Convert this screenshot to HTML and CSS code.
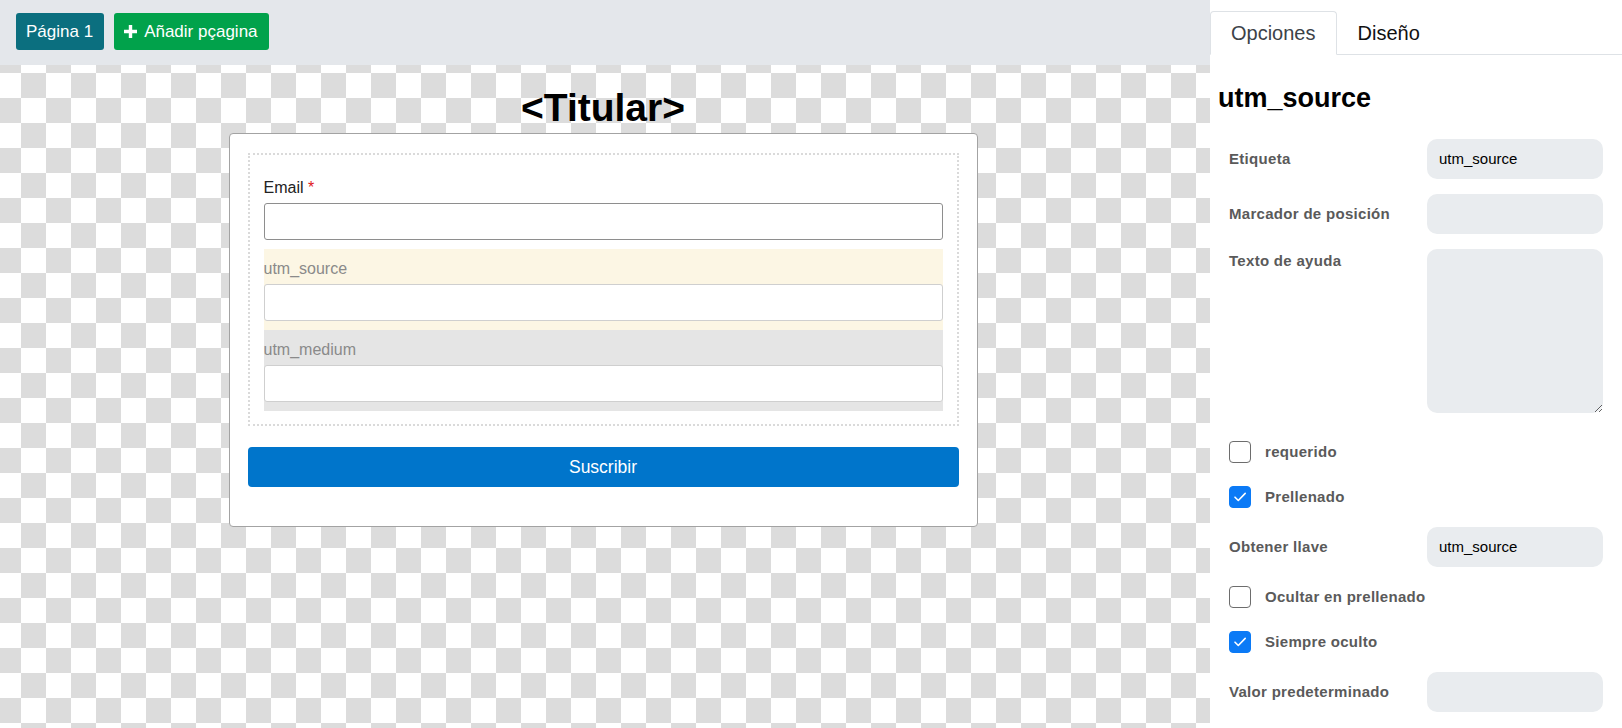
FILE: index.html
```html
<!DOCTYPE html>
<html lang="es">
<head>
<meta charset="utf-8">
<title>Editor de formulario</title>
<link rel="stylesheet" href="styles.css">
</head>
<body>
<div class="app">
  <div class="editor">
    <div class="toolbar">
      <button class="tbtn page">Página 1</button>
      <button class="tbtn add"><svg class="plus" width="13" height="13" viewBox="0 0 13 13"><path d="M4.8 0h3.4v4.8H13v3.4H8.2V13H4.8V8.2H0V4.8h4.8z" fill="#fff"/></svg>Añadir pçagina</button>
    </div>
    <div class="canvas">
      <h1 class="title">&lt;Titular&gt;</h1>
      <div class="card">
        <div class="fields">
          <div class="field">
            <label class="flabel">Email <span class="req">*</span></label>
            <div class="finput dark"></div>
          </div>
          <div class="field hidden source">
            <label class="flabel muted">utm_source</label>
            <div class="finput"></div>
          </div>
          <div class="field hidden medium">
            <label class="flabel muted">utm_medium</label>
            <div class="finput"></div>
          </div>
        </div>
        <button class="submit">Suscribir</button>
      </div>
    </div>
  </div>
  <aside class="panel">
    <div class="tabs">
      <div class="tab active">Opciones</div>
      <div class="tab">Diseño</div>
    </div>
    <h2 class="panel-title">utm_source</h2>
    <div class="rows">
      <div class="row"><span class="plabel">Etiqueta</span><div class="pinput">utm_source</div></div>
      <div class="row"><span class="plabel">Marcador de posición</span><div class="pinput"></div></div>
      <div class="row top"><span class="plabel">Texto de ayuda</span><textarea class="ptext"></textarea></div>
      <div class="crow"><span class="cb"></span><span class="plabel">requerido</span></div>
      <div class="crow"><span class="cb on"><svg width="22" height="22" viewBox="0 0 22 22"><path d="M6 11.2l3.3 3.3L16.2 7.4" fill="none" stroke="#fff" stroke-width="1.6" stroke-linecap="round" stroke-linejoin="round"/></svg></span><span class="plabel">Prellenado</span></div>
      <div class="row"><span class="plabel">Obtener llave</span><div class="pinput">utm_source</div></div>
      <div class="crow"><span class="cb"></span><span class="plabel">Ocultar en prellenado</span></div>
      <div class="crow"><span class="cb on"><svg width="22" height="22" viewBox="0 0 22 22"><path d="M6 11.2l3.3 3.3L16.2 7.4" fill="none" stroke="#fff" stroke-width="1.6" stroke-linecap="round" stroke-linejoin="round"/></svg></span><span class="plabel">Siempre oculto</span></div>
      <div class="row"><span class="plabel">Valor predeterminado</span><div class="pinput"></div></div>
    </div>
  </aside>
</div>
</body>
</html>
```
FILE: styles.css
```css
* { box-sizing: border-box; }
html, body { margin: 0; padding: 0; }
body {
  font-family: "Liberation Sans", Arial, Helvetica, sans-serif;
  background: #fff;
  color: #000;
}
.app {
  display: flex;
  width: 1622px;
  height: 728px;
  overflow: hidden;
}
.editor {
  width: 1210px;
  display: flex;
  flex-direction: column;
}
.toolbar {
  height: 65px;
  background: #e4e7eb;
  padding: 13px 16px 0;
  display: flex;
  gap: 10px;
  align-items: flex-start;
}
.tbtn {
  height: 37px;
  border: 0;
  border-radius: 3px;
  color: #fff;
  font-family: "Liberation Sans", Arial, sans-serif;
  font-size: 17px;
  display: inline-flex;
  align-items: center;
  padding: 0 11px 0 10px;
  cursor: pointer;
}
.tbtn.page { background: #0b6f7f; }
.tbtn.add { background: #01a24b; }
.plus { margin-right: 7px; }
.canvas {
  flex: 1;
  padding: 23px 4px 0 0;
  background-color: #fff;
  background-image: repeating-conic-gradient(#dcdcdc 0 25%, #ffffff 0 50%);
  background-size: 50px 50px;
  background-position: 21px 33px;
}
.title {
  margin: 0;
  text-align: center;
  font-size: 39px;
  line-height: 40px;
  font-weight: bold;
  color: #000;
}
.card {
  width: 749px;
  margin: 5px auto 0;
  background: #fff;
  border: 1px solid #a3a3a3;
  border-radius: 4px;
  padding: 19px 18px 39px;
}
.fields {
  border: 2px dotted #dadada;
  padding: 13px 14px;
}
.field {
  padding: 8px 0 9px;
}
.field.source { background: #fcf6e4; }
.field.medium { background: #e5e5e5; }
.flabel {
  display: block;
  font-size: 16px;
  line-height: 24px;
  margin-bottom: 3px;
  color: #222;
}
.flabel.muted { color: #8a8a8a; }
.req { color: #e0161c; }
.finput {
  height: 37px;
  background: #fff;
  border: 1px solid #cfcfcf;
  border-radius: 3px;
}
.finput.dark { border-color: #8e8e8e; }
.submit {
  display: block;
  width: 100%;
  height: 40px;
  margin-top: 21px;
  border: 0;
  border-radius: 4px;
  background: #0075cb;
  color: #fff;
  font-family: "Liberation Sans", Arial, sans-serif;
  font-size: 17.5px;
}
.panel {
  flex: 1;
  background: #fff;
}
.tabs {
  display: flex;
  padding-top: 11px;
  border-bottom: 1px solid #dee2e6;
}
.tab {
  height: 44px;
  padding: 0 20px;
  display: flex;
  align-items: center;
  font-size: 20px;
  color: #111;
  border: 1px solid transparent;
  border-radius: 4px 4px 0 0;
  margin-bottom: -1px;
}
.tab.active {
  color: #3c4248;
  border-color: #dee2e6 #dee2e6 #fff;
  background: #fff;
}
.panel-title {
  margin: 27px 0 0;
  padding-left: 8px;
  font-size: 27px;
  line-height: 32px;
  font-weight: bold;
  color: #000;
}
.rows {
  padding: 25px 19px 0;
}
.row {
  display: flex;
  align-items: center;
  margin-bottom: 15px;
}
.row.top {
  align-items: flex-start;
  margin-bottom: 24px;
}
.plabel {
  flex: 1;
  font-size: 15px;
  line-height: 24px;
  font-weight: bold;
  letter-spacing: 0.3px;
  color: #5a5a5a;
}
.pinput {
  width: 176px;
  height: 40px;
  background: #e9ecef;
  border-radius: 10px;
  padding: 0 12px;
  font-size: 15px;
  line-height: 40px;
  color: #000;
}
.ptext {
  display: block;
  width: 176px;
  height: 164px;
  background: #e9ecef;
  border: 0;
  border-radius: 10px;
  resize: vertical;
  margin: 0;
  padding: 8px 12px;
  font-family: inherit;
}
.crow {
  display: flex;
  align-items: center;
  height: 30px;
  margin-bottom: 15px;
}
.crow .plabel { flex: none; }
.cb {
  width: 22px;
  height: 22px;
  border: 1px solid #6d6d6d;
  border-radius: 4px;
  background: #fff;
  margin-right: 14px;
  flex: none;
  display: block;
}
.cb.on {
  background: #0b7af6;
  border-color: #0b7af6;
}
.cb.on svg { display: block; margin: -1px; }
```
